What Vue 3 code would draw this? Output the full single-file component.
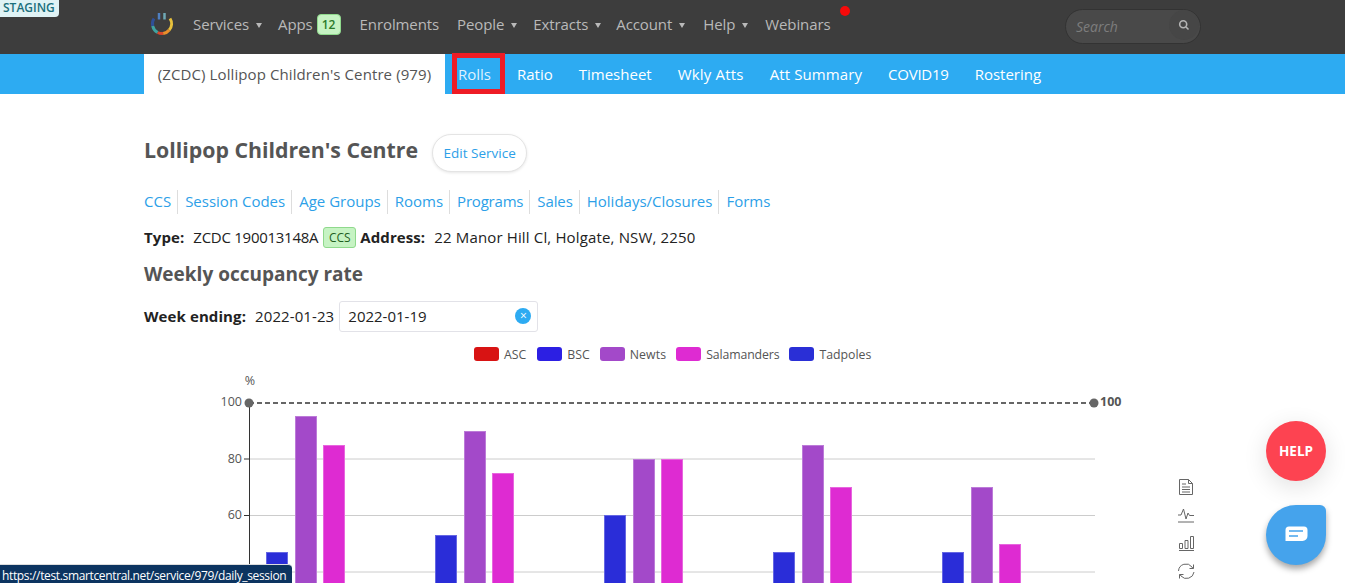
<script setup>
const mainNav = [
  { label: 'Services', caret: true, cls: 'n-services' },
  { label: 'Apps', badge: '12', cls: 'n-apps' },
  { label: 'Enrolments', cls: 'n-enrol' },
  { label: 'People', caret: true, cls: 'n-people' },
  { label: 'Extracts', caret: true, cls: 'n-extracts' },
  { label: 'Account', caret: true, cls: 'n-account' },
  { label: 'Help', caret: true, cls: 'n-help' },
  { label: 'Webinars', cls: 'n-webinars' }
]
const subNav = ['Ratio', 'Timesheet', 'Wkly Atts', 'Att Summary', 'COVID19', 'Rostering']
const links = ['CCS', 'Session Codes', 'Age Groups', 'Rooms', 'Programs', 'Sales', 'Holidays/Closures', 'Forms']
const legend = [
  { name: 'ASC', color: '#d81313' },
  { name: 'BSC', color: '#2c1fe3' },
  { name: 'Newts', color: '#a349c9' },
  { name: 'Salamanders', color: '#de2bd2' },
  { name: 'Tadpoles', color: '#2a2fd6' }
]
const y = v => 402 + (100 - v) * 2.825
const groups = [
  { x: 266, v: [47, 95, 85] },
  { x: 435, v: [53, 90, 75] },
  { x: 604, v: [60, 80, 80] },
  { x: 773, v: [47, 85, 70] },
  { x: 942, v: [47, 70, 50] }
]
const colors = ['#2a2dd8', '#a349c9', '#de2bd2']
const offs = [0, 29, 57]
const bars = groups.flatMap(g => g.v.map((v, i) => ({
  x: g.x + offs[i], y: Math.round(y(v) + 0.3), c: colors[i]
})))
const ticks = [100, 80, 60]
const gridlines = [80, 60, 40]
</script>

<template>
  <div class="page">
    <div class="staging">STAGING</div>
    <header class="topbar">
      <svg class="logo" width="24" height="24" viewBox="0 0 24 24" fill="none">
        <path d="M4 6.500A9.500 9.500 0 0 0 2.700 14" stroke="#2f4f96" stroke-width="3"/>
        <path d="M2.700 14a9.500 9.500 0 0 0 5 6.500" stroke="#3fa3a0" stroke-width="3"/>
        <path d="M7.700 20.500a9.500 9.500 0 0 0 5.500 1" stroke="#d9472b" stroke-width="3"/>
        <path d="M13.200 21.500a9.500 9.500 0 0 0 6 -3.500" stroke="#ea8f2b" stroke-width="3"/>
        <path d="M19.200 18A9.500 9.500 0 0 0 20 6.500" stroke="#e8c13c" stroke-width="3"/>
        <path d="M9 1v6.500" stroke="#4f7fc0" stroke-width="2.500"/>
        <path d="M14.500 1v6.500" stroke="#6fa9b5" stroke-width="2.500"/>
      </svg>
      <nav class="mainnav">
        <a v-for="n in mainNav" :key="n.label" class="navitem" :class="n.cls">
          {{ n.label }}
          <span v-if="n.caret" class="caret"></span>
          <span v-if="n.badge" class="navbadge">{{ n.badge }}</span>
        </a>
      </nav>
      <span class="dot"></span>
      <div class="search">
        <span class="search-text">Search</span>
        <span class="search-btn">
          <svg width="12" height="12" viewBox="0 0 12 12" fill="none" stroke="#b5b5b5" stroke-width="1.600">
            <circle cx="5.200" cy="5.200" r="3.500"/><path d="M8 8l2.500 2.500"/>
          </svg>
        </span>
      </div>
    </header>

    <div class="subbar">
      <span class="subactive">(ZCDC) Lollipop Children's Centre (979)</span>
      <a class="rolls">Rolls</a>
      <a v-for="s in subNav" :key="s" class="subitem">{{ s }}</a>
    </div>

    <main class="content">
      <div class="titlerow">
        <h1>Lollipop Children's Centre</h1>
        <button class="editbtn">Edit Service</button>
      </div>
      <div class="links">
        <a v-for="l in links" :key="l">{{ l }}</a>
      </div>
      <p class="info">
        <b>Type:</b><span class="v1">ZCDC 190013148A</span><span class="ccs">CCS</span><b>Address:</b><span class="v2">22 Manor Hill Cl, Holgate, NSW, 2250</span>
      </p>
      <h2>Weekly occupancy rate</h2>
      <div class="weekrow">
        <b>Week ending:</b>
        <span class="v3">2022-01-23</span>
        <div class="dateinput">
          <span>2022-01-19</span>
          <span class="clear">×</span>
        </div>
      </div>
      <div class="legend">
        <span v-for="l in legend" :key="l.name" class="legitem">
          <i :style="{ background: l.color }"></i>{{ l.name }}
        </span>
      </div>
      <svg class="chart" width="1201" height="300" viewBox="0 369 1201 300">
        <text x="250" y="385" class="lbl" text-anchor="middle">%</text>
        <g v-for="t in gridlines" :key="t">
          <line x1="249" :x2="1095" :y1="y(t) + .5" :y2="y(t) + .5" stroke="#ccc"/>
          <line x1="244" x2="249" :y1="y(t) + .5" :y2="y(t) + .5" stroke="#333"/>
        </g>
        <text v-for="t in ticks" :key="t" x="242" :y="y(t) + 4" class="lbl" text-anchor="end">{{ t }}</text>
        <g v-for="(b, i) in bars" :key="i">
          <rect :x="b.x" :y="b.y" width="22" height="300" :fill="b.c"/>
          <rect :x="b.x + .5" :y="b.y + .5" width="21" height="300" fill="none" stroke="#fff" stroke-opacity=".28"/>
        </g>
        <line x1="249.500" x2="249.500" y1="402" y2="640" stroke="#333"/>
        <line x1="249" x2="1094" y1="403" y2="403" stroke="#666" stroke-width="2" stroke-dasharray="5 3"/>
        <circle cx="249" cy="403" r="4.500" fill="#666"/>
        <circle cx="1094" cy="403" r="4.500" fill="#666"/>
        <text x="1100" y="406" class="lbl bold">100</text>
        <g fill="none" stroke="#666" transform="translate(1179 479)">
          <path d="M.5.500h9l4 4v11h-13zM9.500.500v4h4M3 5h4M3 8h8M3 10.500h8M3 13h8"/>
          <g transform="translate(-2 28)">
            <path d="M1 8h3l2.500 -6 2.500 10 2 -6 1.500 2.500h4.500M1 15h16"/>
          </g>
          <g transform="translate(-1 56)">
            <path d="M1.500 8.500h3v5h-3zM7 5.500h3v8h-3zM12.500 1.500h3v12h-3zM1 15.500h15"/>
          </g>
          <g transform="translate(-2 84)">
            <path d="M1.500 8A7.500 7.500 0 0 1 15 4l1 1.500M17 9a7.500 7.500 0 0 1 -13 4l-1 -1.500M16.500 1.500v4h-4M2.500 15.500v-4h4"/>
          </g>
        </g>
      </svg>
    </main>

    <div class="helpbtn">HELP</div>
    <div class="chatbtn">
      <svg width="24" height="18" viewBox="0 0 24 18">
        <path d="M5 .5h15a3.500 3.500 0 0 1 3.500 3.500v6a5 5 0 0 1 -5 5H1.500V4A3.500 3.500 0 0 1 5 .5z" fill="#fff"/>
        <path d="M5 5h14" stroke="#45a3ec" stroke-width="1.500"/>
        <path d="M5 10h9" stroke="#45a3ec" stroke-width="1.500"/>
      </svg>
    </div>
    <div class="statusbar">https://test.smartcentral.net/service/979/daily_session</div>
  </div>
</template>

<style>
html, body { margin: 0; background: #fff; overflow: hidden; }
</style>

<style scoped>
.page {
  position: relative;
  height: 583px;
  overflow: hidden;
  font-family: "Open Sans", "Noto Sans", sans-serif;
  font-size: 15px;
  color: #333;
}
.staging {
  position: absolute; left: 0; top: 0;
  width: 59px; height: 17px; box-sizing: border-box;
  background: #e0f3f5; color: #1b6f7c;
  font-size: 12px; font-weight: 600; line-height: 15px; padding-left: 3px;
  border-radius: 0 0 4px 0;
  z-index: 3;
}
.topbar {
  height: 54px; background: #3d3d3d;
  display: flex; align-items: center;
  padding-left: 150px; box-sizing: border-box;
  position: relative;
}
.logo { flex: none; margin-top: -6px; }
.mainnav { display: flex; align-items: center; margin-left: 19px; margin-top: -6px; }
.navitem { color: #b9b9b9; font-size: 15px; display: flex; align-items: center; letter-spacing: -.1px; }
.caret {
  width: 0; height: 0; margin-left: 7px;
  border-left: 3.500px solid transparent; border-right: 3.500px solid transparent;
  border-top: 5px solid #b9b9b9; margin-top: 2px;
}
.navbadge {
  background: #c6f3c3; color: #2a7a2a; border: 1px solid #8fd98c;
  border-radius: 4px; width: 24px; height: 21px; box-sizing: border-box;
  display: flex; align-items: center; justify-content: center;
  font-size: 12px; font-weight: 600; margin-left: 4px;
}
.n-services, .n-people { margin-right: 16px; }
.n-extracts { margin-right: 15px; }
.n-account { margin-right: 18px; }
.n-help { margin-right: 17px; }
.n-enrol { margin-right: 18px; }
.n-apps { margin-right: 19px; }
.dot {
  position: absolute; left: 840px; top: 5.500px;
  width: 10px; height: 10px; border-radius: 50%; background: #f60a0a;
}
.search {
  margin-left: auto; margin-right: 144px;
  width: 136px; height: 35px; box-sizing: border-box;
  margin-top: -2px;
  background: #494949; border: 1px solid #333; border-radius: 18px;
  display: flex; align-items: center; justify-content: space-between;
  padding-left: 10px;
}
.search-text { color: #7d7d7d; font-style: italic; font-size: 14px; }
.search-btn {
  width: 30px; height: 30px; border-radius: 50%; background: #464646;
  display: flex; align-items: center; justify-content: center; margin-right: 1px; margin-top: -3px;
}
.subbar {
  height: 40px; background: #2dabf2;
  display: flex; align-items: stretch;
  padding-left: 144px; box-sizing: border-box;
  color: #fff; font-size: 15px;
}
.subactive {
  background: #fff; color: #555; width: 301px; display: flex; align-items: center; justify-content: center;
  letter-spacing: .1px; box-sizing: border-box;
}
.rolls {
  width: 53px; height: 41px; box-sizing: border-box; margin-left: 7px; margin-top: -1px;
  border: 5px solid #ee1c25;
  color: #dff2ff; display: flex; align-items: center; padding-left: 1px;
  position: relative;
}
.subitem { display: flex; align-items: center; margin-left: 26px; }
.rolls + .subitem { margin-left: 12px; }
.subitem:nth-child(5) { letter-spacing: .2px; }
.subitem:nth-child(6) { letter-spacing: .1px; }
.subitem:nth-child(7) { letter-spacing: -.25px; }
.content { padding-left: 144px; }
.titlerow { display: flex; align-items: center; height: 38px; margin-top: 40px; }
h1 { margin: 0 0 8px; font-size: 21.300px; font-weight: 700; color: #555; }
.editbtn {
  margin-left: 14px; width: 95px; height: 38px; border-radius: 19px;
  border: 1px solid #e4e4e4; background: #fff; color: #2d9fe8; font: inherit; font-size: 13.500px;
  box-shadow: 0 1px 3px rgba(0,0,0,.1); padding: 0;
}
.links { display: flex; margin-top: 18px; height: 24px; align-items: center; color: #2d9fe8; }
.links a { padding: 0 6px 0 7px; border-right: 1px solid #ddd; height: 24px; line-height: 22px; }
.links a:first-child { padding-left: 0; }
.links a:last-child { border-right: 0; }
.links a:nth-child(5) { letter-spacing: -.2px; }
.links a:nth-child(6) { letter-spacing: -.1px; }
.info { margin: 11px 0 0; height: 24px; display: flex; align-items: center; color: #222; }
.info b, .weekrow b { letter-spacing: .1px; }
.v1 { margin-left: 9px; letter-spacing: -.27px; }
.ccs {
  background: #c6f3c3; border: 1px solid #8fd98c; color: #1f5f1f; border-radius: 3px;
  font-size: 12px; width: 33px; height: 21px; box-sizing: border-box; margin: 0 4px 0 5px;
  display: flex; align-items: center; justify-content: center;
}
.v2 { margin-left: 9px; letter-spacing: .15px; }
h2 { margin: 12px 0 0; font-size: 19px; height: 26px; line-height: 26px; font-weight: 700; color: #555; }
.weekrow { display: flex; align-items: center; margin-top: 14px; height: 30px; color: #222; }
.v3 { margin-left: 9px; letter-spacing: .1px; }
.dateinput {
  margin-left: 5px; width: 199px; height: 31px; box-sizing: border-box;
  border: 1px solid #e2e2e8; border-radius: 3px; background: #fff;
  display: flex; align-items: center; justify-content: space-between; padding: 0 6px 0 8px;
}
.clear {
  width: 16px; height: 16px; border-radius: 50%; background: #2dabf2; color: #fff;
  display: flex; align-items: center; justify-content: center; font-size: 12px; line-height: 1;
}
.legend {
  display: flex; margin-top: 8px; height: 30px; align-items: center; padding-left: 330px;
  font-size: 12.300px; color: #555;
}
.legitem { display: flex; align-items: center; margin-right: 10px; }
.legitem:first-child { margin-right: 11px; }
.legitem:nth-child(3) { letter-spacing: .1px; }
.legitem:nth-child(4) { letter-spacing: -.12px; }
.legitem i { width: 25px; height: 14px; border-radius: 3px; margin-right: 5px; display: block; }
.chart { display: block; margin-left: -144px; }
.lbl { font-size: 12.500px; fill: #555; }
.lbl.bold { font-weight: 700; }
.helpbtn {
  position: absolute; left: 1266px; top: 421px; width: 60px; height: 60px; border-radius: 50%;
  background: #fd4351; color: #fff; font-weight: 700; font-size: 13.500px;
  display: flex; align-items: center; justify-content: center;
  box-shadow: 0 6px 24px rgba(0,0,0,.12);
}
.chatbtn {
  position: absolute; left: 1266px; top: 505px; width: 60px; height: 60px;
  border-radius: 50% 6px 50% 50%;
  background: #45a3ec;
  display: flex; align-items: center; justify-content: center;
  box-shadow: 0 4px 6px rgba(0,0,0,.35);
}
.statusbar {
  position: absolute; left: 0; bottom: 0; height: 19px; width: 292px; box-sizing: border-box;
  background: #0c3460; color: #fff; font-size: 12px; letter-spacing: -.35px; line-height: 21px; padding-left: 2px;
  border-radius: 0 4px 0 0; border-top: 1px solid #ddd;
  white-space: nowrap; overflow: hidden;
}
</style>
